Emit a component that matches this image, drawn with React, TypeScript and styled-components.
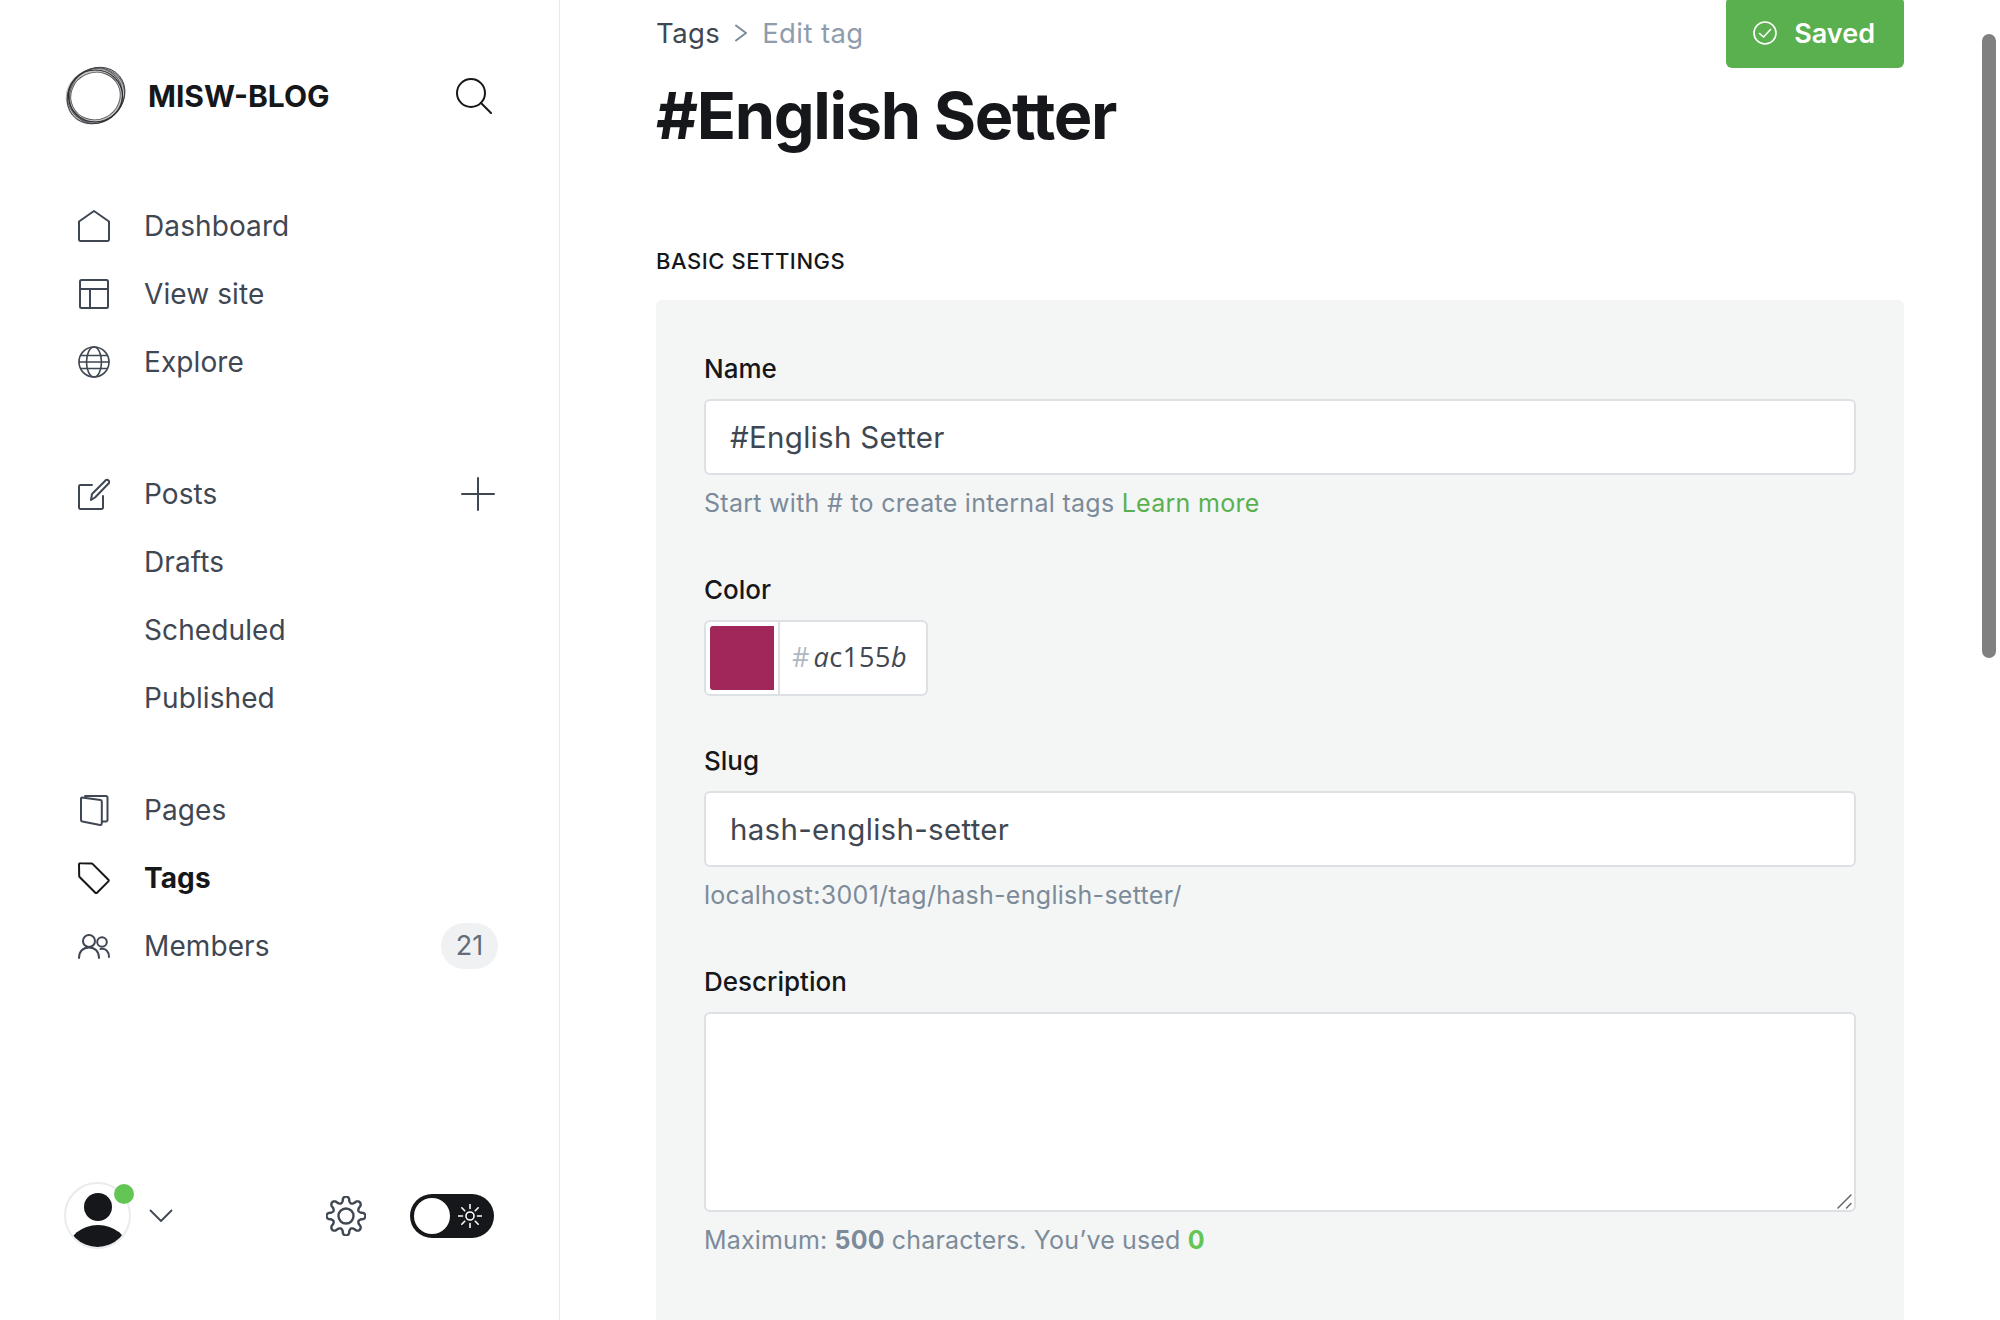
import React from 'react'
import styled, { createGlobalStyle } from 'styled-components'

const GlobalStyle = createGlobalStyle`
  html, body {
    margin: 0;
    padding: 0;
    height: 100%;
    overflow: hidden;
    background: #fff;
    font-family: Inter, "Noto Sans", "Liberation Sans", sans-serif;
    -webkit-font-smoothing: antialiased;
  }
  * { box-sizing: border-box; }
`

const Page = styled.div`
  position: relative;
  display: flex;
  width: 100%;
  height: 100vh;
  overflow: hidden;
`

const Sidebar = styled.aside`
  flex: none;
  display: flex;
  flex-direction: column;
  width: 560px;
  height: 100%;
  padding: 65px 61px 71px 66px;
  border-right: 1px solid #e6e9eb;
`

const Brand = styled.div`
  display: flex;
  align-items: center;
  height: 60px;
  margin-bottom: 66px;
  padding-right: 6px;

  > svg:last-child {
    margin-top: 1px;
  }
`

const BrandName = styled.span`
  margin-left: 22px;
  padding-top: 2px;
  flex: 1;
  color: #15171a;
  font-size: 30px;
  font-weight: 700;
`

const Nav = styled.nav<{ $gap?: number }>`
  display: flex;
  flex-direction: column;
  margin-bottom: ${p => p.$gap ?? 0}px;
`

const NavRow = styled.div<{ $active?: boolean; $sub?: boolean }>`
  display: flex;
  align-items: center;
  gap: 33px;
  height: 68px;
  padding-top: 1px;
  padding-left: ${p => (p.$sub ? 78 : 12)}px;
  color: ${p => (p.$active ? '#15171a' : '#3f4752')};
  font-size: 28px;
  font-weight: ${p => (p.$active ? 700 : 400)};
  letter-spacing: 0.1px;

  svg {
    flex: none;
  }
`

const NavLabel = styled.span`
  flex: 1;
  margin-left: 1px;
`

const PlusSlot = styled.span`
  display: flex;
  margin-right: 3px;
`

const Badge = styled.span`
  display: flex;
  align-items: center;
  justify-content: center;
  width: 57px;
  height: 46px;
  border-radius: 23px;
  background: #eff1f3;
  color: #626d79;
  font-size: 27px;
`

const Footer = styled.div`
  display: flex;
  align-items: center;
  margin-top: auto;
  margin-left: -2px;
  padding-right: 4px;
`

const Avatar = styled.div`
  position: relative;
  width: 67px;
  height: 67px;
  border-radius: 50%;
  border: 2px solid #e9ecee;
  overflow: hidden;
`

const AvatarWrap = styled.div`
  position: relative;
  flex: none;
`

const Presence = styled.span`
  position: absolute;
  top: 2px;
  right: -3px;
  width: 20px;
  height: 20px;
  border-radius: 50%;
  background: #62c554;
`

const ChevronBox = styled.span`
  display: flex;
  margin-left: 18px;
  margin-right: auto;
`

const ThemeToggle = styled.div`
  display: flex;
  align-items: center;
  justify-content: space-between;
  width: 84px;
  height: 44px;
  margin-left: 44px;
  padding: 0 12px 0 4px;
  border-radius: 22px;
  background: #15171a;
`

const Knob = styled.span`
  width: 36px;
  height: 36px;
  border-radius: 50%;
  background: #fff;
`

const Main = styled.main`
  flex: 1;
  display: flex;
  flex-direction: column;
  min-width: 0;
  padding: 0 96px;
`

const TopRow = styled.header`
  display: flex;
  align-items: flex-start;
  justify-content: space-between;
  height: 244px;
`

const Crumbs = styled.div`
  display: flex;
  align-items: center;
  gap: 15px;
  height: 36px;
  margin-top: 15px;
  font-size: 27.5px;
  letter-spacing: 0.4px;
`

const CrumbLink = styled.span<{ $muted?: boolean }>`
  color: ${p => (p.$muted ? '#8e9cac' : '#3f4752')};
`

const Title = styled.h1`
  margin: 25px 0 0;
  color: #15171a;
  font-size: 64.8px;
  line-height: 80px;
  font-weight: 700;
  letter-spacing: -1.35px;
`

const SavedButton = styled.button`
  display: flex;
  align-items: center;
  gap: 17px;
  height: 71px;
  margin-top: -3px;
  padding: 1px 29px 0 27px;
  border: 0;
  border-radius: 6px;
  background: #5ab04f;
  color: #fff;
  font-family: inherit;
  font-size: 27px;
  font-weight: 600;
`

const SectionLabel = styled.h4`
  margin: 0;
  height: 56px;
  padding-top: 3px;
  color: #15171a;
  font-size: 22px;
  line-height: 28px;
  font-weight: 500;
  letter-spacing: 0.55px;
`

const Card = styled.section`
  flex: 1;
  padding: 48px 48px 0;
  border-radius: 6px 6px 0 0;
  background: #f4f6f6;
`

const Field = styled.div<{ $gap?: number }>`
  margin-bottom: ${p => p.$gap ?? 48}px;
`

const Label = styled.label`
  display: block;
  height: 42px;
  margin-bottom: 9px;
  color: #15171a;
  font-size: 26px;
  line-height: 42px;
  font-weight: 500;
`

const TextBox = styled.div`
  display: flex;
  align-items: center;
  height: 76px;
  padding: 0 24px;
  border: 2px solid #dde1e5;
  border-radius: 6px;
  background: #fff;
  color: #3f4752;
  font-size: 29.5px;
  letter-spacing: 0.3px;
`

const TextAreaWrap = styled.div`
  position: relative;
`

const TextArea = styled.textarea`
  display: block;
  width: 100%;
  height: 200px;
  padding: 16px 24px;
  border: 2px solid #dde1e5;
  border-radius: 6px;
  background: #fff;
  outline: none;
  resize: none;
`

const ResizeGrip = styled.svg`
  position: absolute;
  right: 4px;
  bottom: 3px;
`

const Hint = styled.p<{ $tight?: boolean }>`
  margin: 10px 0 0;
  color: #7c8b9a;
  font-size: 25px;
  line-height: 36px;
  letter-spacing: ${p => (p.$tight ? 0.15 : 0.28)}px;
`

const GreenLink = styled.a`
  color: #5ab04f;
`

const Strong = styled.b<{ $green?: boolean }>`
  color: ${p => (p.$green ? '#62c554' : 'inherit')};
  font-weight: 700;
`

const ColorInput = styled.div`
  display: flex;
  width: 224px;
  height: 76px;
  border: 2px solid #dde1e5;
  border-radius: 6px;
  background: #fff;
  overflow: hidden;
`

const SwatchCell = styled.div`
  flex: none;
  width: 74px;
  padding: 4px 4px;
  border-right: 2px solid #dde1e5;
`

const Swatch = styled.div<{ $color: string }>`
  width: 64px;
  height: 64px;
  border-radius: 3px 0 0 3px;
  background: ${p => p.$color};
`

const HexCell = styled.div`
  display: flex;
  align-items: center;
  padding-left: 12px;
  padding-bottom: 3px;
  font-family: "Open Sans", sans-serif;
  font-size: 27px;
`

const HexHash = styled.span`
  margin-right: 4px;
  color: #aeb7c1;
`

const HexValue = styled.span`
  color: #3f4752;
  letter-spacing: 0.6px;
`

const HexSlant = styled.i`
  font-style: italic;
`

const Scrollbar = styled.div`
  position: absolute;
  top: 34px;
  right: 4px;
  width: 14px;
  height: 624px;
  border-radius: 7px;
  background: #808080;
`

const gearPath = (() => {
  const pts: string[] = []
  for (let i = 0; i < 240; i++) {
    const t = (i / 240) * Math.PI * 2
    const wave = Math.cos(t * 8)
    const r = 16.5 + 3 * Math.sign(wave) * Math.pow(Math.abs(wave), 0.6)
    pts.push(`${(20 + r * Math.sin(t)).toFixed(2)} ${(20 - r * Math.cos(t)).toFixed(2)}`)
  }
  return `M${pts.join('L')}Z`
})()

type IconProps = { color?: string }

const Icon: React.FC<React.PropsWithChildren<IconProps & { size?: number; box?: number; sw?: number }>> = ({
  children,
  color = '#3f4752',
  size = 32,
  box = 32,
  sw = 2,
}) => (
  <svg
    width={size}
    height={size}
    viewBox={`0 0 ${box} ${box}`}
    fill="none"
    stroke={color}
    strokeWidth={sw}
    strokeLinecap="round"
    strokeLinejoin="round"
  >
    {children}
  </svg>
)

const LogoMark = () => (
  <svg width="60" height="60" viewBox="0 0 60 60" fill="none" stroke="#3a3c40" strokeWidth="0.9" style={{ flex: 'none', overflow: 'visible' }}>
    <ellipse cx="30" cy="31" rx="31" ry="26.5" transform="rotate(-40 30 31)" fill="#c4c4c4" stroke="none" />
    <ellipse cx="29" cy="31" rx="29.5" ry="27" transform="rotate(-15 29 31)" fill="#c4c4c4" stroke="none" />
    <ellipse cx="30" cy="30.5" rx="30.5" ry="26.5" transform="rotate(-40 30 30.5)" />
    <ellipse cx="30" cy="30" rx="29" ry="26.5" transform="rotate(-28 30 30)" strokeOpacity="0.8" />
    <ellipse cx="30" cy="31" rx="28" ry="26" transform="rotate(-60 30 31)" strokeOpacity="0.8" />
    <ellipse cx="29.5" cy="31" rx="27" ry="26" strokeWidth="1.2" stroke="#2a2c30" />
    <ellipse cx="29.5" cy="31" rx="25" ry="23.5" transform="rotate(-25 29.5 31)" fill="#fff" stroke="#55575b" />
  </svg>
)

const SearchIcon = () => (
  <Icon color="#15171a" size={36} box={36}>
    <circle cx="15" cy="15" r="14" />
    <path d="M25 25l10 10" />
  </Icon>
)

const HomeIcon = () => (
  <Icon>
    <path d="M1 11.5L16 1l15 10.5V29.5a1.5 1.5 0 0 1-1.5 1.5h-27A1.5 1.5 0 0 1 1 29.5z" />
  </Icon>
)

const LayoutIcon = () => (
  <Icon>
    <rect x="2" y="2" width="28" height="28" rx="1.5" />
    <path d="M2 11h28M12 11v19" />
  </Icon>
)

const GlobeIcon = () => (
  <Icon sw={1.6}>
    <circle cx="16" cy="16" r="15" />
    <ellipse cx="16" cy="16" rx="7.5" ry="15" />
    <path d="M3 9.5h26M1 16h30M3 22.5h26" />
  </Icon>
)

const EditIcon = () => (
  <Icon>
    <path d="M14 7H2.5A1.5 1.5 0 0 0 1 8.5v21A1.5 1.5 0 0 0 2.5 31h21a1.5 1.5 0 0 0 1.5-1.5V18" />
    <path d="M13 22l1-6L28 2a2.3 2.3 0 0 1 3 3L17 19.5z" />
  </Icon>
)

const PlusIcon = () => (
  <Icon size={34} box={34}>
    <path d="M17 1v32M1 17h32" />
  </Icon>
)

const PagesIcon = () => (
  <Icon>
    <path d="M7 2h21a1.5 1.5 0 0 1 1.5 1.5V26a1.5 1.5 0 0 1-1.5 1.5h-4" />
    <path d="M4 3.5L22.5 6a1.5 1.5 0 0 1 1.3 1.5V29.5a1.5 1.5 0 0 1-1.8 1.4L4.3 27.5A1.5 1.5 0 0 1 3 26V4.5A1 1 0 0 1 4 3.5z" />
  </Icon>
)

const TagIcon = () => (
  <Icon color="#15171a">
    <path d="M2.5 1.2L13.5 1.5a2 2 0 0 1 1.3.6l15.6 15.6a1.2 1.2 0 0 1 0 1.7L19 30.8a1.2 1.2 0 0 1-1.7 0L1.8 15.3a2 2 0 0 1-.6-1.4L1 2.6a1.4 1.4 0 0 1 1.5-1.4z" />
  </Icon>
)

const MembersIcon = () => (
  <Icon>
    <circle cx="11" cy="11" r="6" />
    <path d="M1 28c0-6.5 4-10.5 10-10.5S21 21.5 21 28" />
    <circle cx="24" cy="12" r="4.8" />
    <path d="M22.5 19c5-1 8.5 2.5 8.5 8" />
  </Icon>
)

const ChevronDown = () => (
  <Icon size={24} box={24} sw={1.8}>
    <path d="M1.5 6.5L12 17L22.5 6.5" />
  </Icon>
)

const GearIcon = () => (
  <svg width="40" height="40" viewBox="0 0 40 40" fill="none" stroke="#3f4752" strokeWidth="2.4">
    <path d={gearPath} strokeLinejoin="round" />
    <circle cx="20" cy="20" r="7.5" />
  </svg>
)

const SunIcon = () => (
  <Icon color="#fff" size={24} box={24} sw={1.6}>
    <circle cx="12" cy="12" r="4" />
    <path d="M12 0.5v4M12 19.5v4M0.5 12h4M19.5 12h4M3.8 3.8l2.9 2.9M17.3 17.3l2.9 2.9M3.8 20.2l2.9-2.9M17.3 6.7l2.9-2.9" />
  </Icon>
)

const ChevronRight = () => (
  <svg width="12" height="18" viewBox="0 0 12 18" fill="none" stroke="#7c8b9a" strokeWidth="2" strokeLinecap="round" strokeLinejoin="round">
    <path d="M1 1.5L11 9L1 16.5" />
  </svg>
)

const CheckCircle = () => (
  <Icon color="#fff" size={24} box={24} sw={1.6}>
    <circle cx="12" cy="12" r="11" />
    <path d="M6.5 12.5l4 3.5l7-7.5" />
  </Icon>
)

const PersonAvatar = () => (
  <svg width="63" height="63" viewBox="0 0 63 63" style={{ display: 'block' }}>
    <circle cx="32" cy="23" r="14" fill="#15171a" />
    <ellipse cx="32" cy="66" rx="30" ry="25" fill="#15171a" />
  </svg>
)

const App: React.FC = () => (
  <Page>
    <GlobalStyle />
    <Sidebar>
      <Brand>
        <LogoMark />
        <BrandName>MISW-BLOG</BrandName>
        <SearchIcon />
      </Brand>
      <Nav $gap={64}>
        <NavRow><HomeIcon /><NavLabel>Dashboard</NavLabel></NavRow>
        <NavRow><LayoutIcon /><NavLabel>View site</NavLabel></NavRow>
        <NavRow><GlobeIcon /><NavLabel>Explore</NavLabel></NavRow>
      </Nav>
      <Nav $gap={44}>
        <NavRow><EditIcon /><NavLabel>Posts</NavLabel><PlusSlot><PlusIcon /></PlusSlot></NavRow>
        <NavRow $sub>Drafts</NavRow>
        <NavRow $sub>Scheduled</NavRow>
        <NavRow $sub>Published</NavRow>
      </Nav>
      <Nav>
        <NavRow><PagesIcon /><NavLabel>Pages</NavLabel></NavRow>
        <NavRow $active><TagIcon /><NavLabel>Tags</NavLabel></NavRow>
        <NavRow><MembersIcon /><NavLabel>Members</NavLabel><Badge>21</Badge></NavRow>
      </Nav>
      <Footer>
        <AvatarWrap>
          <Avatar><PersonAvatar /></Avatar>
          <Presence />
        </AvatarWrap>
        <ChevronBox><ChevronDown /></ChevronBox>
        <GearIcon />
        <ThemeToggle>
          <Knob />
          <SunIcon />
        </ThemeToggle>
      </Footer>
    </Sidebar>
    <Main>
      <TopRow>
        <div>
          <Crumbs>
            <CrumbLink>Tags</CrumbLink>
            <ChevronRight />
            <CrumbLink $muted>Edit tag</CrumbLink>
          </Crumbs>
          <Title>#English Setter</Title>
        </div>
        <SavedButton><CheckCircle />Saved</SavedButton>
      </TopRow>
      <SectionLabel>BASIC SETTINGS</SectionLabel>
      <Card>
        <Field>
          <Label>Name</Label>
          <TextBox>#English Setter</TextBox>
          <Hint>Start with # to create internal tags <GreenLink>Learn more</GreenLink></Hint>
        </Field>
        <Field $gap={44}>
          <Label>Color</Label>
          <ColorInput>
            <SwatchCell><Swatch $color="#a1275b" /></SwatchCell>
            <HexCell>
              <HexHash>#</HexHash>
              <HexValue><HexSlant>a</HexSlant>c155<HexSlant>b</HexSlant></HexValue>
            </HexCell>
          </ColorInput>
        </Field>
        <Field>
          <Label>Slug</Label>
          <TextBox>hash-english-setter</TextBox>
          <Hint>localhost:3001/tag/hash-english-setter/</Hint>
        </Field>
        <Field>
          <Label>Description</Label>
          <TextAreaWrap>
            <TextArea />
            <ResizeGrip width="15" height="15" viewBox="0 0 15 15" fill="none" stroke="#666" strokeWidth="1.5" strokeLinecap="round">
              <path d="M1 14L14 1M9.5 14L14 9.5" />
            </ResizeGrip>
          </TextAreaWrap>
          <Hint $tight>Maximum: <Strong>500</Strong> characters. You’ve used <Strong $green>0</Strong></Hint>
        </Field>
      </Card>
    </Main>
    <Scrollbar />
  </Page>
)

export default App
